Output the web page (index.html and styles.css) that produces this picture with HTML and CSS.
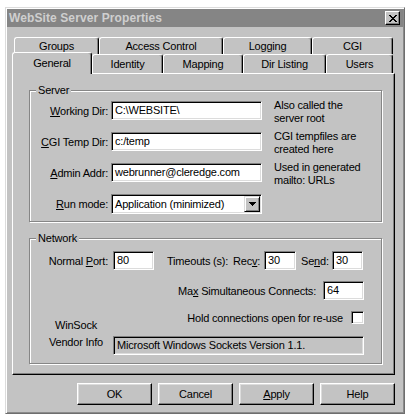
FILE: index.html
```html
<!DOCTYPE html>
<html>
<head>
<meta charset="utf-8">
<title>WebSite Server Properties</title>
<link rel="stylesheet" href="styles.css">
</head>
<body>
<div class="window">
  <div class="titlebar">
    <span class="title">WebSite Server Properties</span>
    <span class="close-btn">
      <svg width="8" height="7" viewBox="0 0 8 7" shape-rendering="crispEdges"><path d="M0 0h2v1h-2zM6 0h2v1h-2zM1 1h2v1h-2zM5 1h2v1h-2zM2 2h4v1h-4zM3 3h2v1h-2zM2 4h4v1h-4zM1 5h2v1h-2zM5 5h2v1h-2zM0 6h2v1h-2zM6 6h2v1h-2z" fill="#000"/></svg>
    </span>
  </div>
  <div class="body">
    <div class="tab-row back">
      <div class="tab t-groups">Groups</div>
      <div class="tab t-access">Access Control</div>
      <div class="tab t-logging">Logging</div>
      <div class="tab t-cgi">CGI</div>
    </div>
    <div class="tab-row front">
      <div class="tab active t-general">General</div>
      <div class="tab t-identity">Identity</div>
      <div class="tab t-mapping">Mapping</div>
      <div class="tab t-dir">Dir Listing</div>
      <div class="tab t-users">Users</div>
    </div>
    <div class="panel">
      <fieldset class="group server">
        <legend><span>Server</span></legend>
        <div class="server-grid">
          <div class="lbl"><u>W</u>orking Dir:</div>
          <div class="field">C:\WEBSITE\</div>
          <div class="hint">Also called the<br>server root</div>

          <div class="lbl"><u>C</u>GI Temp Dir:</div>
          <div class="field">c:/temp</div>
          <div class="hint">CGI tempfiles are<br>created here</div>

          <div class="lbl"><u>A</u>dmin Addr:</div>
          <div class="field">webrunner@cleredge.com</div>
          <div class="hint">Used in generated<br>mailto: URLs</div>

          <div class="lbl"><u>R</u>un mode:</div>
          <div class="field select">
            <span>Application (minimized)</span>
            <span class="drop-btn"><svg width="7" height="4" viewBox="0 0 7 4" shape-rendering="crispEdges"><path d="M0 0h7v1h-7zM1 1h5v1h-5zM2 2h3v1h-3zM3 3h1v1h-1z" fill="#000"/></svg></span>
          </div>
          <div></div>
        </div>
      </fieldset>

      <fieldset class="group network">
        <legend><span>Network</span></legend>
        <div class="net-row row1">
          <div class="net-label">Normal <u>P</u>ort:</div>
          <div class="field port">80</div>
          <div class="timeouts">Timeouts (s):</div>
          <div class="small-lbl">Rec<u>v</u>:</div>
          <div class="field num recv">30</div>
          <div class="small-lbl send-lbl">Se<u>n</u>d:</div>
          <div class="field num send">30</div>
        </div>
        <div class="net-row row2 right">
          <div class="inline-lbl">Ma<u>x</u> Simultaneous Connects:</div>
          <div class="field port">64</div>
        </div>
        <div class="net-row row3 right">
          <div class="inline-lbl">Hold connections open for re-use</div>
          <div class="checkbox"></div>
        </div>
        <div class="net-row row4">
          <div class="vendor-lbl">WinSock<br>Vendor Info</div>
          <div class="field readonly">Microsoft Windows Sockets Version 1.1.</div>
        </div>
      </fieldset>
    </div>
    <div class="buttons">
      <div class="btn">OK</div>
      <div class="btn">Cancel</div>
      <div class="btn"><u>A</u>pply</div>
      <div class="btn">Help</div>
    </div>
  </div>
</div>
</body>
</html>
```
FILE: styles.css
```css
* { box-sizing: border-box; }
html, body { margin: 0; padding: 0; background: #fff; }
body {
  font-family: "Liberation Sans", Arial, sans-serif;
  font-size: 11px;
  letter-spacing: -0.2px;
  color: #000;
}
u { text-decoration: underline; text-underline-offset: 1px; }

.window {
  margin: 7px 0 0 5px;
  width: 400px;
  height: 407px;
  background: #c3c3c3;
  border: 1px solid;
  border-color: #dcdcdc #6e6e6e #6e6e6e #dcdcdc;
  box-shadow: inset 1px 1px #fff, inset -1px -1px #8a8a8a;
  padding: 1px;
}

.titlebar {
  height: 18px;
  background: #858585;
  display: flex;
  align-items: center;
  justify-content: space-between;
  padding-left: 2px;
}
.title {
  color: #cfcfcf;
  font-weight: bold;
  font-size: 12px;
  letter-spacing: 0.1px;
}
.close-btn {
  width: 15px;
  height: 14px;
  margin-right: 3px;
  background: #c3c3c3;
  border: 1px solid;
  border-color: #fff #000 #000 #fff;
  box-shadow: inset -1px -1px #808080;
  display: flex;
  align-items: center;
  justify-content: center;
}

.body { padding: 10px 0 0 5px; }

.tab-row { display: flex; }
.tab-row.back { margin-left: 2px; height: 17px; }
.tab-row.front { height: 19px; align-items: flex-end; }

.tab {
  background: #c3c3c3;
  height: 17px;
  border-top: 1px solid #fff;
  border-left: 1px solid #fff;
  border-right: 1px solid #000;
  box-shadow: inset -1px 0 #808080;
  border-radius: 3px 3px 0 0;
  text-align: center;
  line-height: 16px;
}
.front .tab { height: 19px; line-height: 18px; }
.front .tab.active {
  height: 22px;
  line-height: 21px;
  margin-bottom: -1px;
  position: relative;
  z-index: 1;
}

.t-groups { width: 85px; }
.t-access { width: 124px; }
.t-logging { width: 89px; }
.t-cgi { width: 81px; }
.t-general { width: 80px; }
.t-identity { width: 71px; }
.t-mapping { width: 80px; }
.t-dir { width: 83px; }
.t-users { width: 67px; }

.panel {
  width: 383px;
  height: 302px;
  border: 1px solid;
  border-color: #fff #000 #000 #fff;
  box-shadow: inset -1px -1px #808080;
  padding: 10px 0 0 16px;
}

.group {
  margin: 0;
  width: 353px;
  min-inline-size: auto;
  border: 1px solid #868686;
  box-shadow: inset 1px 1px #fff, 1px 1px #fff;
  padding: 4px 0 8px 0;
}
.group legend {
  margin-left: 6px;
  padding: 0 2px;
  line-height: 13px;
  background: #c3c3c3;
}
.network { margin-top: 10px; padding: 6px 17px 8px 0; }

.server-grid {
  display: grid;
  grid-template-columns: 81px 151px 1fr;
  grid-auto-rows: 19px;
  row-gap: 12px;
}
.lbl {
  text-align: right;
  padding-right: 3px;
  align-self: center;
}
.hint {
  margin-left: 12px;
  margin-top: -2px;
  line-height: 13px;
  align-self: start;
  white-space: nowrap;
}

.field {
  height: 19px;
  background: #fff;
  border: 1px solid;
  border-color: #808080 #fff #fff #808080;
  box-shadow: inset 1px 1px #000, inset -1px -1px #dcdcdc;
  padding: 0 3px;
  line-height: 17px;
  white-space: nowrap;
  overflow: hidden;
}
.select {
  height: 20px;
  display: flex;
  align-items: center;
  justify-content: space-between;
  padding: 0 1px 0 3px;
}
.drop-btn {
  width: 16px;
  height: 16px;
  background: #c3c3c3;
  border: 1px solid;
  border-color: #dcdcdc #000 #000 #dcdcdc;
  box-shadow: inset 1px 1px #fff, inset -1px -1px #808080;
  display: flex;
  align-items: center;
  justify-content: center;
}

.net-row { display: flex; align-items: center; }
.net-label { width: 78px; text-align: right; }
.port { width: 41px; margin-left: 5px; }
.timeouts { margin-left: 13px; width: 66px; }
.small-lbl { width: 31px; }
.send-lbl { margin-left: 5px; width: 31px; }
.num { width: 31px; }
.recv { width: 32px; }
.row2, .row3 { justify-content: flex-end; }
.row2 { margin-top: 11px; }
.row2 .port { margin-left: 7px; }
.row3 { margin-top: 11px; height: 13px; }
.checkbox {
  width: 13px;
  height: 13px;
  margin-left: 8px;
  background: #fff;
  border: 1px solid;
  border-color: #808080 #fff #fff #808080;
  box-shadow: inset 1px 1px #000, inset -1px -1px #dcdcdc;
}
.row4 { margin-top: 12px; align-items: flex-end; height: 19px; }
.vendor-lbl {
  width: 60px;
  margin-left: 16px;
  margin-right: 7px;
  text-align: center;
  line-height: 17px;
  margin-bottom: 4px;
}
.readonly { width: 251px; background: #c3c3c3; }

.buttons {
  width: 383px;
  display: flex;
  justify-content: flex-end;
  gap: 6px;
  margin-top: 8px;
}
.btn {
  width: 75px;
  height: 22px;
  border: 1px solid;
  border-color: #fff #000 #000 #fff;
  box-shadow: inset -1px -1px #808080, inset 1px 1px #dcdcdc;
  text-align: center;
  line-height: 20px;
}
```
